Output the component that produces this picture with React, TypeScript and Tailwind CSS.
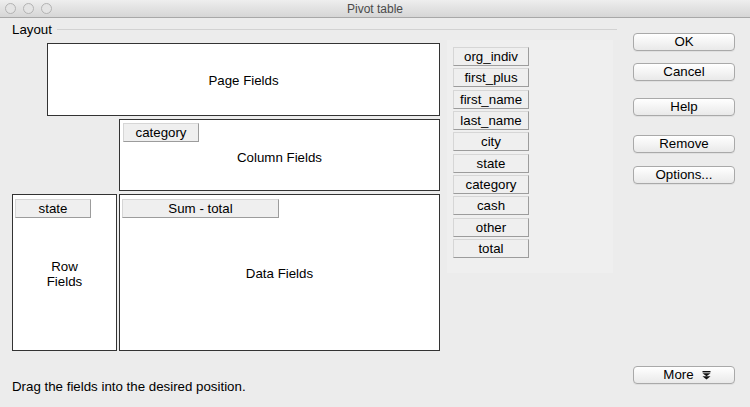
const FIELDS = [
  "org_indiv",
  "first_plus",
  "first_name",
  "last_name",
  "city",
  "state",
  "category",
  "cash",
  "other",
  "total",
];

const FONT = { fontFamily: '"Liberation Sans", "DejaVu Sans", sans-serif' };

function FieldButton({ label, className = "" }: { label: string; className?: string }) {
  return (
    <div
      className={
        "flex items-center justify-center h-[19px] bg-[#efefef] border border-[#d6d6d6] border-b-[#9c9c9c] border-r-[#9c9c9c] text-[13.3px] text-black leading-none " +
        className
      }
    >
      {label}
    </div>
  );
}

function MacButton({ label, children }: { label: string; children?: React.ReactNode }) {
  return (
    <div className="flex items-center justify-center gap-2 w-[102px] h-[18px] rounded-[4px] border border-[#a9a9a9] bg-gradient-to-b from-white to-[#e9e9e9] text-[13.3px] text-black leading-none shadow-[0_1px_0_rgba(0,0,0,0.05)]">
      {label}
      {children}
    </div>
  );
}

export default function App() {
  return (
    <div className="w-[750px] h-[407px] flex flex-col bg-[#ececec] overflow-hidden" style={FONT}>
      {/* Title bar */}
      <div className="relative h-[18px] flex items-center justify-center bg-gradient-to-b from-[#eeeeee] to-[#d6d6d6] border-b border-[#a8a8a8]">
        <div className="absolute left-[5px] top-[3px] flex gap-[7px]">
          <span className="w-[11px] h-[11px] rounded-full border border-[#b3b3b3] bg-[#e4e4e4]" />
          <span className="w-[11px] h-[11px] rounded-full border border-[#b3b3b3] bg-[#e4e4e4]" />
          <span className="w-[11px] h-[11px] rounded-full border border-[#b3b3b3] bg-[#e4e4e4]" />
        </div>
        <span className="text-[12px] text-[#4a4a4a] leading-none">Pivot table</span>
      </div>

      <div className="flex flex-1">
        {/* Left: layout */}
        <div className="w-[617px] flex flex-col pl-[12px]">
          <div className="flex items-center h-[14px] mt-[5px]">
            <span className="text-[13.3px] text-black leading-none">Layout</span>
            <div className="flex-1 ml-[5px] h-[2px] border-t border-[#d2d2d2] border-b-white" />
          </div>

          <div className="flex mt-[6px]">
            <div className="w-[428px] flex flex-col gap-[3px]">
              <div className="ml-[35px] w-[393px] h-[73px] bg-white border border-[#333] flex items-center justify-center text-[13.3px] text-black pt-[2px]">
                Page Fields
              </div>
              <div className="ml-[107px] w-[321px] h-[72px] bg-white border border-[#333] flex flex-col">
                <FieldButton label="category" className="w-[76px] mt-[3px] ml-[3px]" />
                <div className="flex-1 flex items-center justify-center text-[13.3px] text-black pb-[16px]">
                  Column Fields
                </div>
              </div>
              <div className="flex gap-[2px]">
                <div className="w-[105px] h-[157px] bg-white border border-[#333] flex flex-col">
                  <FieldButton label="state" className="w-[76px] mt-[4px] ml-[2px]" />
                  <div className="flex-1 flex items-center justify-center text-center text-[13.3px] text-black leading-[15px] pb-[20px]">
                    Row
                    <br />
                    Fields
                  </div>
                </div>
                <div className="w-[321px] h-[157px] bg-white border border-[#333] flex flex-col">
                  <FieldButton label="Sum - total" className="w-[157px] mt-[4px] ml-[2px]" />
                  <div className="flex-1 flex items-center justify-center text-[13.3px] text-black pb-[20px]">
                    Data Fields
                  </div>
                </div>
              </div>
            </div>

            <div className="ml-[7px] w-[166px] h-[233px] -mt-[3px] bg-[#efefef] pl-[6px] pt-[7px]">
              <div className="w-[76px] flex flex-col gap-[2.35px]">
                {FIELDS.map((f) => (
                  <FieldButton key={f} label={f} />
                ))}
              </div>
            </div>
          </div>

          <div className="mt-auto mb-[13px] text-[13.3px] text-black leading-[15px]">
            Drag the fields into the desired position.
          </div>
        </div>

        {/* Right: buttons */}
        <div className="flex-1 flex flex-col pl-[16px] pt-[15px]">
          <MacButton label="OK" />
          <div className="mt-[12px]">
            <MacButton label="Cancel" />
          </div>
          <div className="mt-[17px]">
            <MacButton label="Help" />
          </div>
          <div className="mt-[19px]">
            <MacButton label="Remove" />
          </div>
          <div className="mt-[13px]">
            <MacButton label="Options..." />
          </div>
          <div className="mt-auto mb-[23px]">
            <MacButton label="More">
              <svg width="9" height="9" viewBox="0 0 9 9" className="-mr-[6px]">
                <rect x="0.5" y="0" width="8" height="1.4" fill="#111" />
                <path d="M0.5 2.2 L8.5 2.2 L4.5 5.2 Z" fill="#111" />
                <path d="M0.5 5.2 L8.5 5.2 L4.5 8.4 Z" fill="#111" />
              </svg>
            </MacButton>
          </div>
        </div>
      </div>
    </div>
  );
}
